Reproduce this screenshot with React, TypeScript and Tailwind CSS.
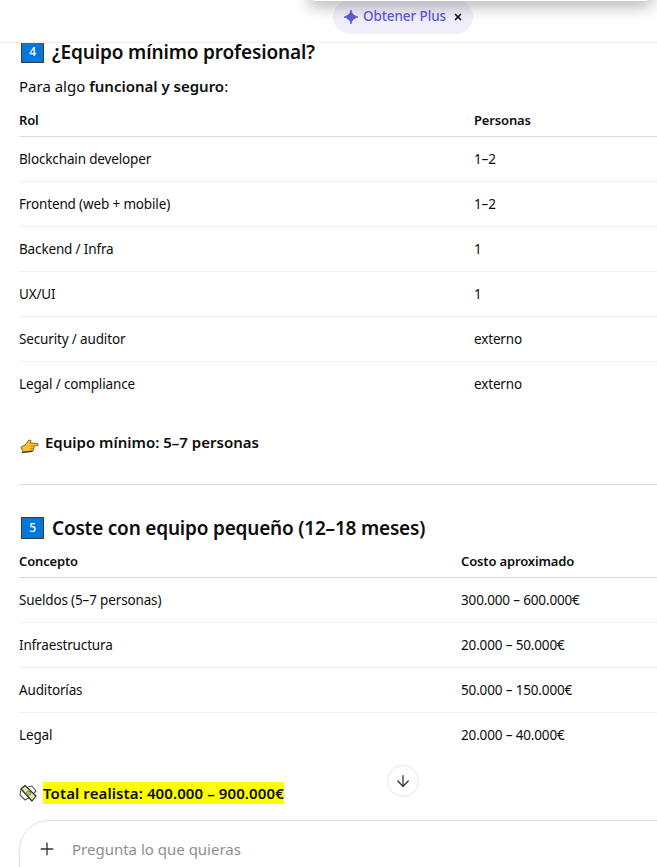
import { ArrowDown, Plus, X } from "lucide-react";

const font = { fontFamily: '"Noto Sans", "Open Sans", sans-serif' };

type Row = { a: string; b: string };

const team: Row[] = [
  { a: "Blockchain developer", b: "1–2" },
  { a: "Frontend (web + mobile)", b: "1–2" },
  { a: "Backend / Infra", b: "1" },
  { a: "UX/UI", b: "1" },
  { a: "Security / auditor", b: "externo" },
  { a: "Legal / compliance", b: "externo" },
];

const costs: Row[] = [
  { a: "Sueldos (5–7 personas)", b: "300.000 – 600.000€" },
  { a: "Infraestructura", b: "20.000 – 50.000€" },
  { a: "Auditorías", b: "50.000 – 150.000€" },
  { a: "Legal", b: "20.000 – 40.000€" },
];

function Keycap({ n }: { n: string }) {
  return (
    <span className="ml-[2px] flex h-[22px] w-[23px] shrink-0 items-center justify-center border border-[#3a3a3a] bg-[#0078d7] text-[12px] font-medium text-white">
      {n}
    </span>
  );
}

function DataTable({ head, rows, colClass }: { head: Row; rows: Row[]; colClass: string }) {
  return (
    <div className="text-[#0d0d0d]">
      <div className={`grid ${colClass} h-[33px] items-center border-b border-[#d9d9d9] pt-[1px] text-[13px] font-semibold tracking-[-0.15px]`}>
        <span>{head.a}</span>
        <span>{head.b}</span>
      </div>
      {rows.map((r, i) => (
        <div
          key={r.a}
          className={`grid ${colClass} h-[45px] items-center border-b pt-[1px] text-[13.5px] tracking-[-0.15px] ${i < rows.length - 1 ? "border-[#f0f0f0]" : "border-transparent"}`}
        >
          <span>{r.a}</span>
          <span>{r.b}</span>
        </div>
      ))}
    </div>
  );
}

export default function App() {
  return (
    <div style={font} className="relative h-[867px] w-[657px] overflow-hidden bg-white text-[#0d0d0d]">
      {/* menu hanging from above the viewport */}
      <div className="absolute left-[308px] top-[-20px] z-20 h-[21px] w-[345px] rounded-lg bg-white shadow-[0_6px_16px_rgba(0,0,0,0.28)]" />

      <header className="relative z-10 flex h-[43px] justify-center border-b border-[#efefef] bg-white pl-[149px]">
        <div className="flex h-[34px] w-[140px] items-center gap-[5px] rounded-[17px] bg-[#f0effb] pb-[2px] pl-[11px] text-[13.5px] font-medium tracking-[-0.1px] text-[#5e5bd6]">
          <svg width="14" height="14" viewBox="0 0 14 14" fill="#5e5bd6" className="mt-[2px] shrink-0">
            <path d="M7 0 C7.6 3.6 9.6 5.6 14 7 C9.6 8.4 7.6 10.4 7 14 C6.4 10.4 4.4 8.4 0 7 C4.4 5.6 6.4 3.6 7 0 Z" stroke="#5e5bd6" strokeWidth="0.8" />
          </svg>
          <span className="whitespace-nowrap">Obtener Plus</span>
          <X size={10} strokeWidth={4} className="ml-[2px] mt-[1px] shrink-0 text-[#111]" />
        </div>
      </header>

      <main className="-mt-[2px] pl-[19px]">
        <h2 className="flex h-[22px] items-center gap-[8px] text-[19px] font-semibold tracking-[-0.15px]">
          <Keycap n="4" />
          <span>¿Equipo mínimo profesional?</span>
        </h2>

        <p className="mt-[12px] h-[22px] text-[15px] leading-[22px]">
          Para algo <strong className="font-semibold">funcional y seguro</strong>:
        </p>

        <div className="mt-[7px]">
          <DataTable head={{ a: "Rol", b: "Personas" }} rows={team} colClass="grid-cols-[455px_1fr]" />
        </div>

        <p className="mt-[24px] flex h-[22px] items-center gap-[6px] text-[15px] font-semibold">
          <svg width="19" height="16" viewBox="0 0 19 16" className="ml-[1px] mt-[8px] shrink-0">
            <path d="M1 9 L5 7 L9 2 L11 2.5 L10.5 5 L18 5.5 L18 7.5 L14 8 L13.5 12.5 L3 14 Z" fill="#fbc02d" stroke="#7a5a10" strokeWidth="0.9" strokeLinejoin="round" />
            <path d="M2 14.5 L12.5 13.5" stroke="#222" strokeWidth="1.2" />
            <path d="M10 8 L14 8 M10 10.5 L13.5 10.5" stroke="#b07d12" strokeWidth="0.8" />
          </svg>
          <span>Equipo mínimo: 5–7 personas</span>
        </p>

        <hr className="mt-[31px] border-[#d9d9d9]" />

        <h2 className="mt-[31px] flex h-[24px] items-center gap-[8px] text-[19px] font-semibold tracking-[-0.2px]">
          <Keycap n="5" />
          <span>Coste con equipo pequeño (12–18 meses)</span>
        </h2>

        <div className="mt-[5px]">
          <DataTable head={{ a: "Concepto", b: "Costo aproximado" }} rows={costs} colClass="grid-cols-[442px_1fr]" />
        </div>

        <p className="mt-[24px] flex h-[22px] items-center gap-[5px] text-[15px] font-semibold tracking-[0.1px]">
          <svg width="19" height="19" viewBox="0 0 19 19" className="shrink-0">
            <path d="M2 5 L6 1.5 L17 12 L13 17 Z" fill="#dfe8a8" stroke="#2c2c2c" strokeWidth="1.2" strokeLinejoin="round" />
            <path d="M2 5 L1 11 L6 16 L10 14 M9 3 L13 2 L17 7 L15 9" fill="none" stroke="#555" strokeWidth="1.1" strokeLinejoin="round" />
            <circle cx="9.5" cy="9.3" r="2.2" fill="#a9bf5f" stroke="#5f7a2e" strokeWidth="0.8" />
          </svg>
          <mark className="bg-[#ffff00] text-[#0d0d0d]">Total realista: 400.000 – 900.000€</mark>
        </p>
      </main>

      <button className="absolute left-[387px] top-[765px] flex h-8 w-8 items-center justify-center rounded-full border border-[#e5e5e5] bg-white text-[#333]">
        <ArrowDown size={18} strokeWidth={1.7} />
      </button>

      <div className="absolute left-[19px] top-[820px] flex h-[80px] w-[660px] items-start rounded-l-[30px] border border-[#e3e3e3] bg-white pl-[17px] pt-[16px] shadow-[0_1px_3px_rgba(0,0,0,0.04)]">
        <Plus size={20} strokeWidth={1.6} className="mt-[2px] text-[#333]" />
        <span className="ml-[15px] text-[15px] leading-[24px] text-[#8f8f8f]">
          Pregunta lo que quieras
        </span>
      </div>
    </div>
  );
}
